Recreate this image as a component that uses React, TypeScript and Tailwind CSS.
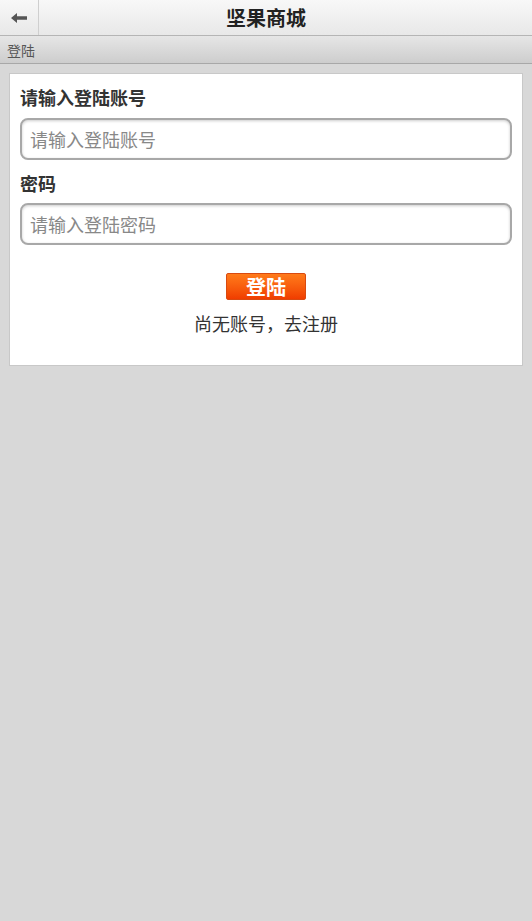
import React from "react";

function BackArrow() {
  return (
    <svg width="16" height="10" viewBox="0 0 16 10" className="block">
      <path d="M0 5 L6 0 L6 3.3 L16 3.3 L16 6.7 L6 6.7 L6 10 Z" fill="#555" />
    </svg>
  );
}

export default function App() {
  const font = { fontFamily: '"Noto Sans CJK SC", "Liberation Sans", sans-serif' };
  return (
    <div className="w-[532px] min-h-[921px] bg-[#d8d8d8] flex flex-col" style={font}>
      <div className="h-[36px] flex items-stretch bg-gradient-to-b from-[#f8f8f8] to-[#e8e8e8] border-b border-[#b5b5b5]">
        <div className="w-[39px] flex items-center justify-center border-r border-[#cfcfcf]">
          <BackArrow />
        </div>
        <div className="flex-1 flex items-center justify-center pr-[39px]">
          <span className="text-[20px] font-bold text-[#222] leading-none">坚果商城</span>
        </div>
      </div>
      <div className="h-[28px] flex items-center px-[7px] bg-gradient-to-b from-[#e6e6e6] to-[#cdcdcd] border-b border-[#a8a8a8]">
        <span className="text-[14px] text-[#555] leading-none">登陆</span>
      </div>
      <div className="px-[9px] pt-[9px]">
        <div className="bg-white border border-[#c8c8c8] px-[10px] pt-[11px] pb-[30px] flex flex-col">
          <label className="text-[18px] font-bold text-[#333] leading-[24px]">请输入登陆账号</label>
          <input
            className="mt-[9px] h-[42px] w-full rounded-[8px] border-2 border-[#a8a8a8] px-[8px] text-[18px] text-[#333] placeholder:text-[#888] outline-none shadow-[inset_0_1px_3px_rgba(0,0,0,0.2)]"
            placeholder="请输入登陆账号"
          />
          <label className="mt-[11px] text-[18px] font-bold text-[#333] leading-[24px]">密码</label>
          <input
            type="text"
            className="mt-[8px] h-[42px] w-full rounded-[8px] border-2 border-[#a8a8a8] px-[8px] text-[18px] text-[#333] placeholder:text-[#888] outline-none shadow-[inset_0_1px_3px_rgba(0,0,0,0.2)]"
            placeholder="请输入登陆密码"
          />
          <div className="mt-[28px] flex flex-col items-center">
            <button className="w-[80px] h-[27px] bg-gradient-to-b from-[#ff7a1a] to-[#f03c00] border border-[#d94a10] rounded-[2px] text-white text-[20px] font-bold leading-none">
              登陆
            </button>
            <span className="mt-[11px] text-[18px] text-[#333] leading-[24px]">尚无账号，去注册</span>
          </div>
        </div>
      </div>
    </div>
  );
}
